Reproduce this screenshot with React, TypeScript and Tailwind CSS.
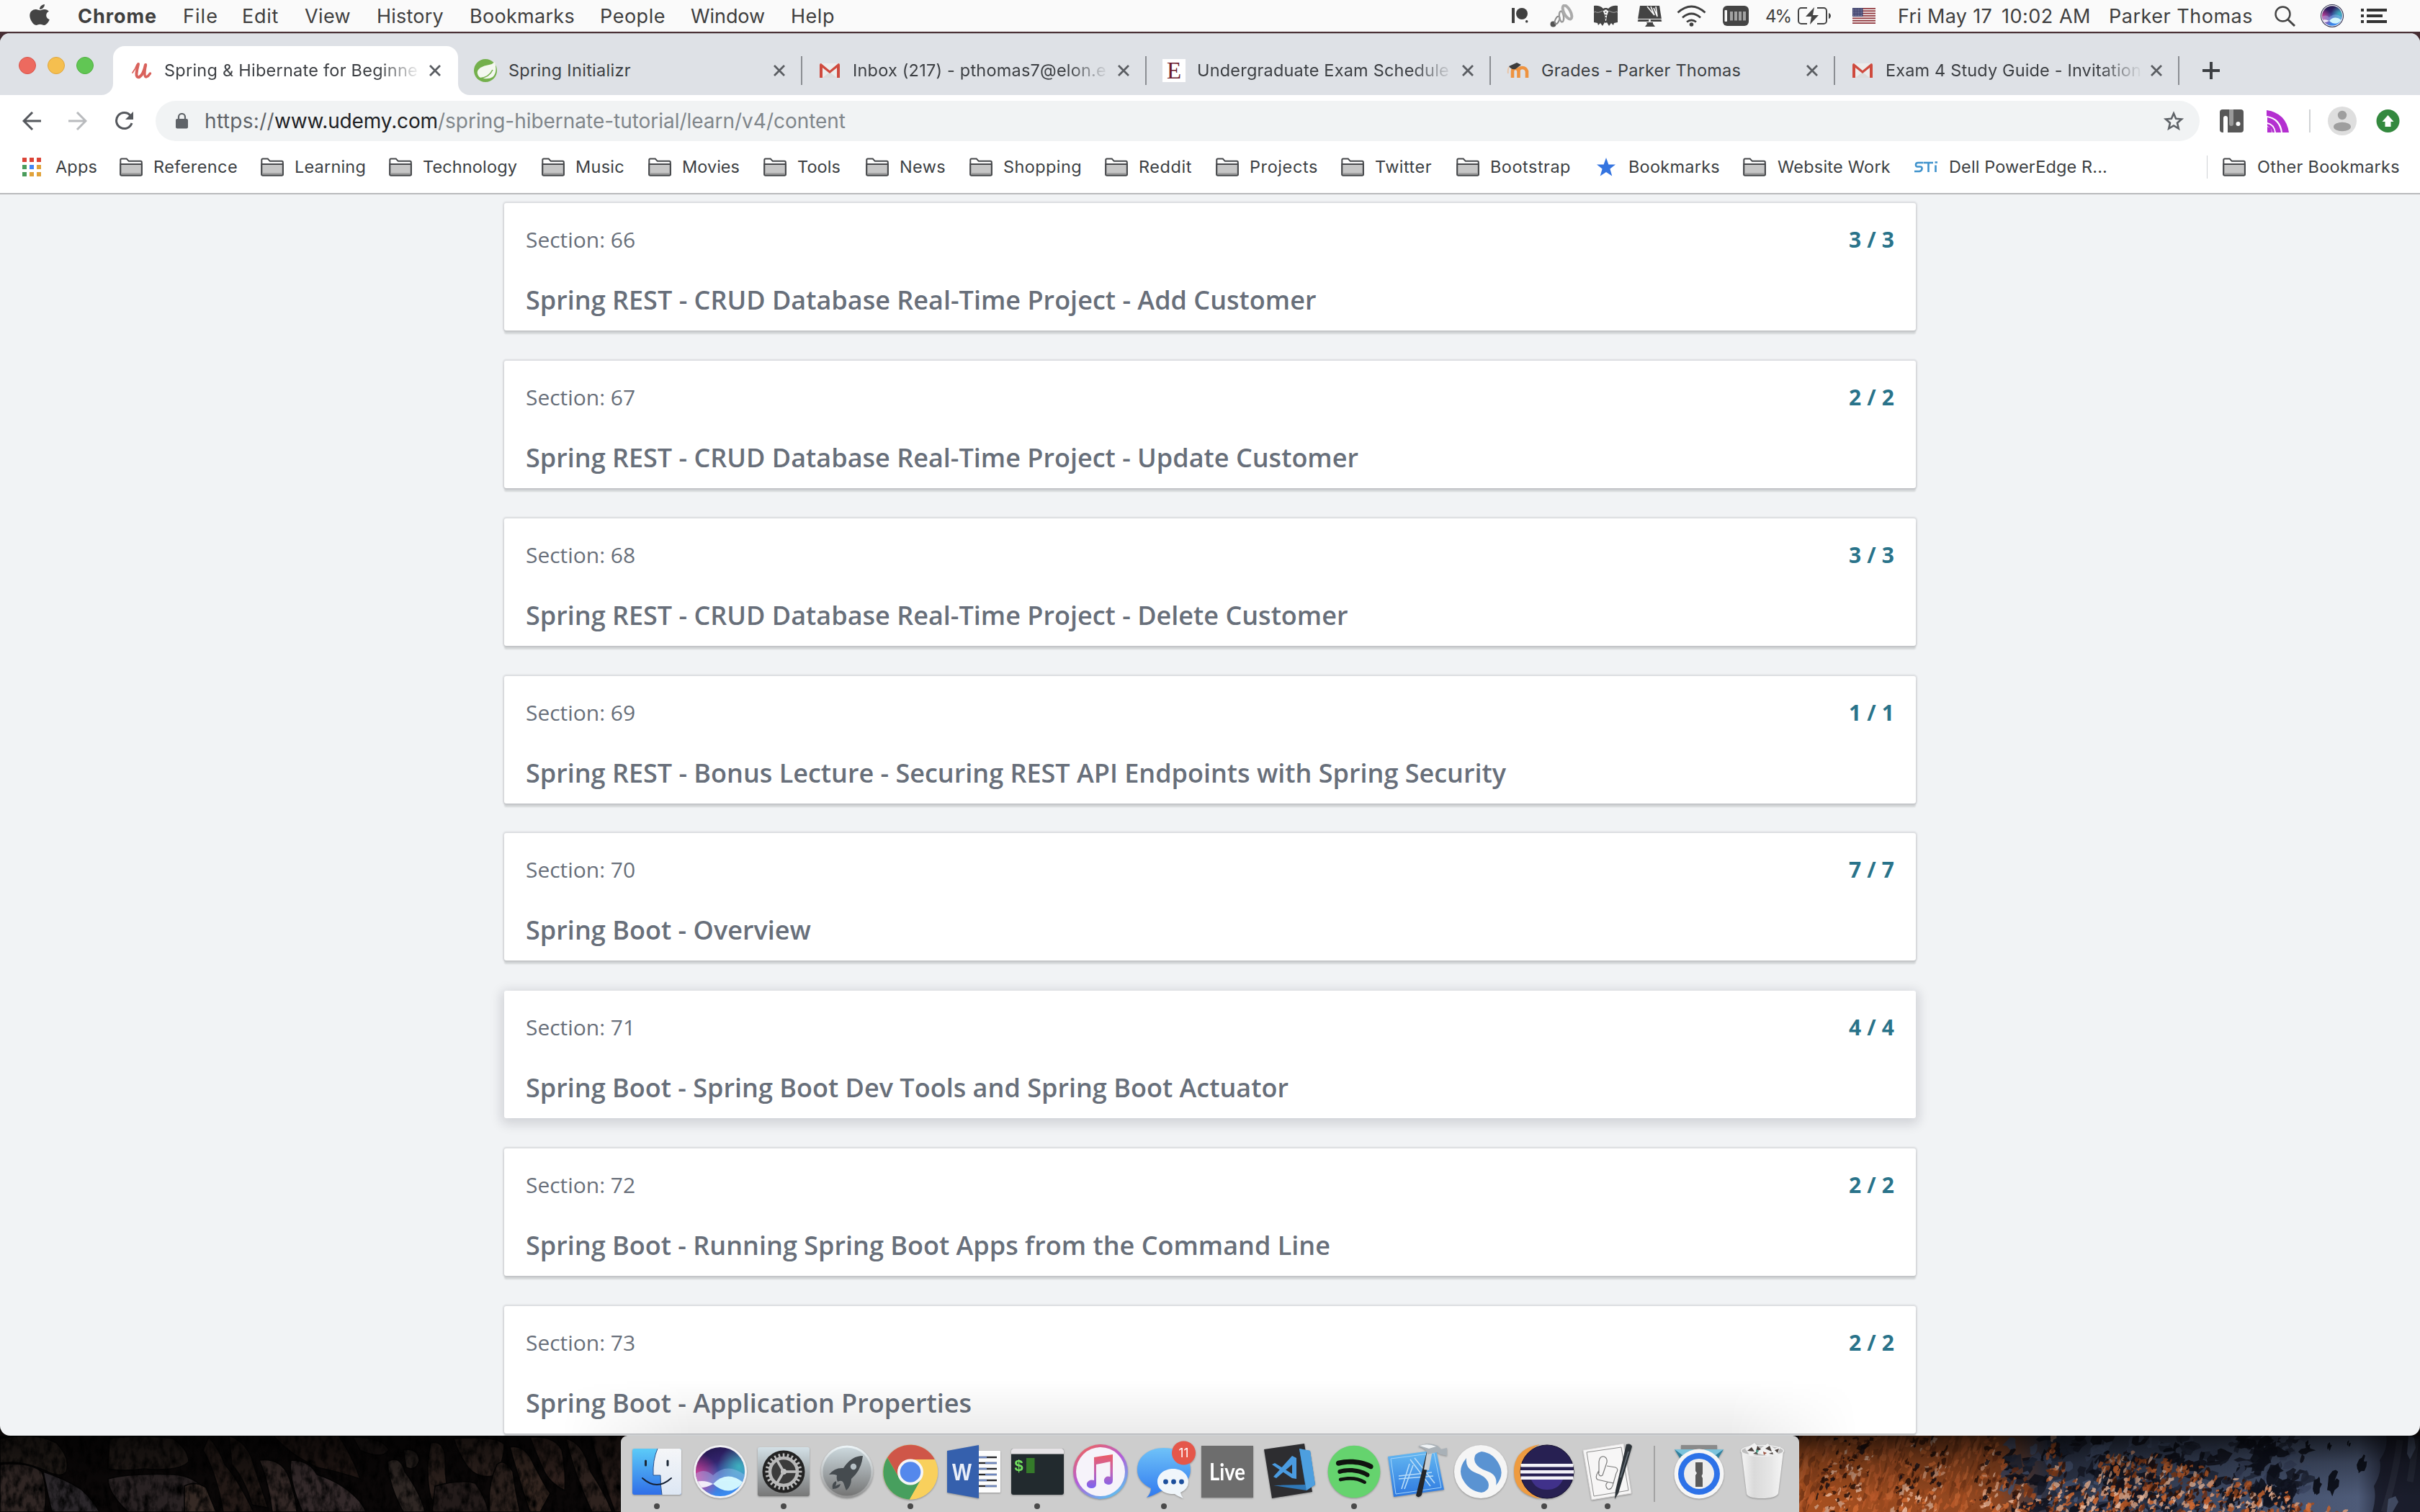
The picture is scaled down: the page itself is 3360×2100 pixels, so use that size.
import React, { useLayoutEffect, useRef } from "react";
import { FaApple, FaSpotify } from "react-icons/fa";

/* Text whose tracking is computed so that it fills a given advance width. */
function Fit({ w, className = "", children }: { w: number; className?: string; children: string }) {
  const ref = useRef<HTMLSpanElement>(null);
  useLayoutEffect(() => {
    const el = ref.current;
    if (!el) return;
    el.style.letterSpacing = "0px";
    const natural = el.getBoundingClientRect().width;
    el.style.letterSpacing = `${(w - natural) / children.length}px`;
  }, [w, children]);
  return (
    <span ref={ref} className={"inline-block shrink-0 whitespace-pre " + className}>
      {children}
    </span>
  );
}

/* ------------------------------ menu bar ------------------------------ */

const menus = [
  { t: "Chrome", w: 110, slot: "w-[146px] font-bold" },
  { t: "File", w: 49, slot: "w-[82px]" },
  { t: "Edit", w: 51, slot: "w-[87px]" },
  { t: "View", w: 64, slot: "w-[100px]" },
  { t: "History", w: 93, slot: "w-[129px]" },
  { t: "Bookmarks", w: 146, slot: "w-[181px]" },
  { t: "People", w: 91, slot: "w-[126px]" },
  { t: "Window", w: 103, slot: "w-[139px]" },
  { t: "Help", w: 61, slot: "w-[70px]" },
];

function BatteryIcon() {
  return (
    <svg width="46" height="26" viewBox="0 0 46 26" fill="none" stroke="#444" strokeWidth="2">
      <path d="M13 2H5a4 4 0 0 0-4 4v14a4 4 0 0 0 4 4h8M27 2h9a4 4 0 0 1 4 4v14a4 4 0 0 1-4 4h-9" />
      <path d="M43 9v8q3-1 3-4t-3-4Z" fill="#444" stroke="none" />
      <path d="M23 1 11 14h8l-2 11 12-13h-8Z" fill="#444" stroke="none" />
    </svg>
  );
}

function Flag() {
  return (
    <svg width="32" height="22" viewBox="0 0 32 22">
      <rect width="32" height="22" fill="#f4eeee" />
      {[0, 1, 2, 3, 4, 5, 6].map((i) => (
        <rect key={i} y={i * 3.38} width="32" height="1.7" fill="#8e3238" />
      ))}
      <rect width="14.5" height="12" fill="#373a66" />
      {[0, 1, 2, 3, 4].map((r) =>
        [0, 1, 2, 3, 4, 5].map((c) => (
          <rect key={r * 6 + c} x={1.2 + c * 2.2} y={1.3 + r * 2.2} width="1" height="1" fill="#c9cbe0" />
        ))
      )}
    </svg>
  );
}

function SiriOrb({ size }: { size: number }) {
  return (
    <svg width={size} height={size} viewBox="0 0 74 74">
      <defs>
        <linearGradient id="orb" x1="0" y1="0" x2=".3" y2="1">
          <stop offset="0" stopColor="#1c1240" />
          <stop offset=".4" stopColor="#33246e" />
          <stop offset=".7" stopColor="#3f6fc4" />
          <stop offset="1" stopColor="#3a8af0" />
        </linearGradient>
        <radialGradient id="orbP" cx="0" cy=".62" r=".5">
          <stop offset="0" stopColor="#f0429a" />
          <stop offset="1" stopColor="#f0429a" stopOpacity="0" />
        </radialGradient>
        <radialGradient id="orbT" cx=".85" cy=".4" r=".4">
          <stop offset="0" stopColor="#3ec7c4" stopOpacity=".8" />
          <stop offset="1" stopColor="#3ec7c4" stopOpacity="0" />
        </radialGradient>
        <clipPath id="orbC">
          <circle cx="37" cy="37" r="34" />
        </clipPath>
      </defs>
      <circle cx="37" cy="37" r="37" fill="#f1f1f3" />
      <g clipPath="url(#orbC)">
        <rect width="74" height="74" fill="url(#orb)" />
        <rect width="74" height="74" fill="url(#orbP)" />
        <rect width="74" height="74" fill="url(#orbT)" />
        <path d="M0 42Q14 30 27 42Q48 22 74 44V58Q50 44 27 54Q12 62 0 54Z" fill="#9fc0f5" opacity=".4" />
        <path d="M0 52q14-5 27 2q-13 8-27 4Z" fill="#fff" opacity=".85" />
        <path d="M27 54Q46 34 69 52Q50 74 27 54Z" fill="#d8fbff" opacity=".95" />
      </g>
    </svg>
  );
}

function MenuBar() {
  return (
    <div className="flex h-[44px] w-full shrink-0 items-center bg-[#fafafa] pl-[42px] text-[27px] leading-[45px] text-[#3f3f3f]">
      <div className="w-[66px]">
        <FaApple className="-mt-1 -ml-px h-[33px] w-[28px] text-[#444]" preserveAspectRatio="none" />
      </div>
      {menus.map((m) => (
        <div key={m.t} className={m.slot}>
          <Fit w={m.w}>{m.t}</Fit>
        </div>
      ))}
      <div className="ml-auto flex w-[1261px] items-center">
        <div className="w-[53px]">
          <svg width="23" height="22" viewBox="0 0 23 22" fill="#3f3f3f">
            <rect width="4" height="21" />
            <circle cx="14" cy="8" r="8" />
            <rect x="19" y="17" width="3.4" height="3.4" rx="1.5" />
          </svg>
        </div>
        <div className="w-[61px]">
          <svg width="34" height="32" viewBox="0 0 34 32" fill="none">
            <circle cx="4.5" cy="27.5" r="4" fill="#555" />
            <ellipse cx="10" cy="22" rx="2.6" ry="5.5" stroke="#888" strokeWidth="2" transform="rotate(24 10 22)" />
            <ellipse cx="16" cy="17" rx="3" ry="7.500" stroke="#999" strokeWidth="2.4" transform="rotate(-8 16 17)" />
            <ellipse cx="24" cy="11" rx="4.5" ry="10.500" stroke="#aaa" strokeWidth="4" transform="rotate(-28 24 11)" />
          </svg>
        </div>
        <div className="w-[60px]">
          <svg width="33" height="30" viewBox="0 0 33 30" fill="#444">
            <path d="M0 1q8-1 13 4l2-1h3l2 1q5-5 13-4v8q-1 1 0 2v13l-5 1-1 3-3-3-3 4-3-5-1.500 1-1.500-1-3 5-3-4-3 3-1-3-5-1V11q1-1 0-2Z" />
            <path d="M13 8q4 6 3.500 14Q17 14 20 8l-2 1v-2h-3v2Z" fill="#fafafa" stroke="#fafafa" strokeWidth="1" />
            <path d="M16.500 9v11" stroke="#444" strokeWidth="1.500" strokeDasharray="2 2" />
            <path d="M1 9q5 3 11-1M32 9q-5 3-11-1" stroke="#aaa" fill="none" />
          </svg>
        </div>
        <div className="w-[55px]">
          <svg width="35" height="29" viewBox="0 0 35 29" fill="#444">
            <path d="M4 0h27l3.500 22H.5Z" />
            <path d="M1 18.500h33l.5 4H.5Z" stroke="#fafafa" strokeWidth="1" />
            <circle cx="17.500" cy="20.500" r="1.500" fill="#fafafa" />
            <path d="M14 1l10 12-5-12M23 3l5 12-2-14" stroke="#fafafa" strokeWidth="1.600" fill="none" />
            <path d="M13 23h9v2l3 4H11l3-4Z" />
          </svg>
        </div>
        <div className="w-[64px]">
          <svg width="41" height="30" viewBox="0 0 41 30" fill="none" stroke="#3f3f3f" strokeWidth="2.800">
            <path d="M1.500 10.500q19-17 38 0M8 17.500q12.500-11 25 0M14 23.500q6.500-5 13 0" />
            <circle cx="20.500" cy="27" r="2.800" fill="#3f3f3f" stroke="none" />
          </svg>
        </div>
        <div className="w-[59px]">
          <svg width="36" height="28" viewBox="0 0 36 28">
            <rect width="36" height="28" rx="6" fill="#444" />
            <rect x="2.500" y="6" width="3.500" height="16" rx="1" fill="#fafafa" />
            {[10, 16, 22, 28].map((x) => (
              <rect key={x} x={x} y="8" width="4" height="12.500" fill="#a2a2a2" />
            ))}
          </svg>
        </div>
        <div className="w-[45px] text-[24px]">
          <Fit w={35}>4%</Fit>
        </div>
        <div className="w-[76px]">
          <BatteryIcon />
        </div>
        <div className="w-[63px]">
          <Flag />
        </div>
        <div className="w-[144px]">
          <Fit w={131}>Fri May 17</Fit>
        </div>
        <div className="w-[149px]">
          <Fit w={124}>10:02 AM</Fit>
        </div>
        <div className="w-[230px]">
          <Fit w={200}>Parker Thomas</Fit>
        </div>
        <div className="w-[64px]">
          <svg width="30" height="29" viewBox="0 0 30 29" fill="none" stroke="#444" strokeWidth="2.400">
            <circle cx="11.500" cy="11.500" r="10" />
            <path d="M18.500 19l9.500 9" strokeWidth="3" />
          </svg>
        </div>
        <div className="flex w-[56px]">
          <div className="rounded-full bg-[#28284a] p-[1px]">
            <SiriOrb size={30} />
          </div>
        </div>
        <svg width="36" height="20" viewBox="0 0 36 20" fill="#333">
          <path d="M0 0h4v4H0zM0 8h4v4H0zM0 16h4v4H0zM8 0h28v4H8zM8 8h22v4H8zM8 16h28v4H8z" />
        </svg>
      </div>
    </div>
  );
}

/* ------------------------------ tab strip ------------------------------ */

function UdemyIcon() {
  return (
    <svg width="32" height="32" viewBox="0 0 32 32" fill="none" stroke="#d9625c" strokeLinecap="round">
      <path d="M11 7Q9 15 8.500 20Q8 26 12.500 25Q18 22 21 8" strokeWidth="4" />
      <path d="M21.500 8Q18 25 22 25Q25 24 27.500 20" strokeWidth="3.400" />
      <path d="M3 19Q7 14 9 8" strokeWidth="1.800" />
    </svg>
  );
}
function SpringIcon() {
  return (
    <svg width="32" height="32" viewBox="0 0 32 32">
      <circle cx="16" cy="16" r="16" fill="#74b04c" />
      <path d="M29 4q4 15-3 21-6 4-18 1Q1 18 9 12q5-3 12-4 5-1 8-4Z" fill="#f4f8f0" />
      <path d="M7 27q14-1 19-12" stroke="#74b04c" strokeWidth="1.600" fill="none" />
      <circle cx="7" cy="26.500" r="1.800" fill="#74b04c" />
    </svg>
  );
}
function GmailIcon() {
  return (
    <svg width="32" height="32" viewBox="0 0 32 32">
      <path d="M2 6h28v20H2Z" fill="#ececec" />
      <path d="M16 18 6 26h20Z" fill="#dcdcdc" />
      <path d="M2 26V8q0-2 2-2l12 10L28 6q2 0 2 2v18h-4V12l-10 8L6 12v14Z" fill="#cf4a3e" />
    </svg>
  );
}
function ElonIcon() {
  return (
    <span className="block h-[32px] w-[32px] bg-white text-center font-['Liberation_Serif'] text-[33px] leading-[33px] text-[#6b1b2e]">
      E
    </span>
  );
}
function MoodleIcon() {
  return (
    <svg width="32" height="32" viewBox="0 0 32 32">
      <path d="M8 26V17q0-4 4-4t4.500 4v9M16.500 26V17q0-5 5-5t6.500 5v9" fill="none" stroke="#ee9340" strokeWidth="4.600" />
      <path d="M3 10 14 5l6 3-8 6q-6 1-9-4Z" fill="#3c3c3c" />
      <path d="M3 11q-2 5-1 9" stroke="#e9c5a8" strokeWidth="2" fill="none" />
    </svg>
  );
}
function CloseX() {
  return (
    <svg width="16" height="16" viewBox="0 0 16 16" stroke="#5a5d62" strokeWidth="2.800" className="ml-auto">
      <path d="M1 1l14 14M15 1 1 15" />
    </svg>
  );
}

const idleTabs = [
  { icon: <SpringIcon />, t: "Spring Initializr", w: 170, fade: false },
  { icon: <GmailIcon />, t: "Inbox (217) - pthomas7@elon.e", w: 352, fade: true },
  { icon: <ElonIcon />, t: "Undergraduate Exam Schedule", w: 350, fade: true },
  { icon: <MoodleIcon />, t: "Grades - Parker Thomas", w: 277, fade: false },
  { icon: <GmailIcon />, t: "Exam 4 Study Guide - Invitation", w: 355, fade: true },
];

const fadeMask = "[mask-image:linear-gradient(to_right,#000_0,#000_298px,transparent_357px)]";

function TabStrip() {
  return (
    <div className="flex h-[85px] shrink-0 bg-[#dee1e6] pl-[26px] text-[23.5px] text-[#3c3f43]">
      <div className="flex w-[115px] gap-[16px] pt-[32px]">
        <span className="h-[24px] w-[24px] rounded-full border border-[#d9544b] bg-[#ed6a5f]" />
        <span className="h-[24px] w-[24px] rounded-full border border-[#dfa63d] bg-[#f5bf4f]" />
        <span className="h-[24px] w-[24px] rounded-full border border-[#4fb03f] bg-[#61c654]" />
      </div>
      <div className="flex items-end">
        <svg width="16" height="16" viewBox="0 0 16 16">
          <path d="M0 16A16 16 0 0 0 16 0V16Z" fill="#fff" />
        </svg>
        <div className="flex h-[68px] w-[479px] items-center rounded-t-[16px] bg-white pr-[24px] pl-[24px]">
          <UdemyIcon />
          <div className={"ml-[15px] w-[357px] " + fadeMask}>
            <Fit w={352}>Spring & Hibernate for Beginne</Fit>
          </div>
          <CloseX />
        </div>
        <svg width="16" height="16" viewBox="0 0 16 16">
          <path d="M0 0V16H16A16 16 0 0 1 0 0Z" fill="#fff" />
        </svg>
      </div>
      <div className="-ml-[16px] flex pt-[17px]">
        {idleTabs.map((tab) => (
          <div key={tab.t} className="flex h-[68px] w-[478px] items-center">
            <div className="flex w-[476px] items-center pr-[22px] pl-[22px]">
              {tab.icon}
              <div className={"ml-[16px] w-[357px] " + (tab.fade ? fadeMask : "")}>
                <Fit w={tab.w}>{tab.t}</Fit>
              </div>
              <CloseX />
            </div>
            <span className="h-[40px] w-[2px] bg-[#8b8e93]" />
          </div>
        ))}
        <svg width="24" height="24" viewBox="0 0 24 24" stroke="#3c3f43" strokeWidth="4" className="mt-[22px] ml-[32px]">
          <path d="M12 0v24M0 12h24" />
        </svg>
      </div>
    </div>
  );
}

/* ------------------------------ toolbar ------------------------------ */

function Toolbar() {
  return (
    <div className="flex h-[72px] shrink-0 items-center bg-white pl-[31px]">
      <svg width="26" height="26" viewBox="0 0 26 26" fill="none" stroke="#55585d" strokeWidth="3">
        <path d="M14 1 2 13l12 12M2 13h24" />
      </svg>
      <svg width="26" height="26" viewBox="0 0 26 26" fill="none" stroke="#b9bbbe" strokeWidth="3" className="ml-[38px]">
        <path d="M12 1l12 12-12 12M24 13H0" />
      </svg>
      <svg width="27" height="26" viewBox="0 0 27 26" fill="none" stroke="#55585d" strokeWidth="3" className="ml-[38px]">
        <path d="M22 5.500A11 11 0 1 0 24 16" />
        <path d="M26 0v11H15Z" fill="#55585d" stroke="none" />
      </svg>
      <div className="ml-[30px] flex h-[56px] w-[2838px] items-center rounded-full bg-[#f1f3f4] pr-[21px] pl-[28px] text-[28px] text-[#80868b]">
        <svg width="17" height="22" viewBox="0 0 17 22" className="mr-[23px]">
          <rect y="8" width="17" height="13.500" rx="2" fill="#5f6368" />
          <path d="M4 9V5.500a4.500 4.500 0 0 1 9 0V9" fill="none" stroke="#5f6368" strokeWidth="2.200" />
        </svg>
        <Fit w={97} className="text-[#5f6368]">https://</Fit>
        <Fit w={227} className="text-[#202124]">www.udemy.com</Fit>
        <Fit w={566}>/spring-hibernate-tutorial/learn/v4/content</Fit>
        <svg width="30" height="28" viewBox="0 0 30 28" fill="none" stroke="#5f6368" strokeWidth="2.600" className="ml-auto">
          <path d="M15 3.500l3.100 7.300 7.900.7-6 5.200 1.800 7.800L15 20.400l-6.800 4.100L10 16.700l-6-5.200 7.900-.7Z" />
        </svg>
      </div>
      <svg width="33" height="32" viewBox="0 0 33 32" className="ml-[28px]">
        <rect width="33" height="32" rx="4" fill="#585858" />
        <path d="M5 32V12q0-3 3-3t3 3v20Z" fill="#fff" />
        <path d="M13 0h6v20q0 3-3 3t-3-3Z" fill="#999" />
        <circle cx="25.500" cy="20" r="3" fill="#fff" />
      </svg>
      <svg width="31" height="31" viewBox="0 0 31 31" fill="#b42fd0" className="ml-[32px]">
        <path d="M0 0Q27 4 31 31H22Q20 11 0 8Z" />
        <path d="M1 10Q17 13 20 31H13Q11 19 1 17Z" />
        <path d="M1 19Q10 21 11 31H8Q7 25 1 22ZM1 23q6 1 6 8H1Z" />
      </svg>
      <span className="ml-[28px] h-[32px] w-[2px] bg-[#d0d2d5]" />
      <svg width="40" height="40" viewBox="0 0 40 40" className="ml-[24px]">
        <circle cx="20" cy="20" r="20" fill="#dedede" />
        <circle cx="20" cy="12" r="6.200" fill="#9e9e9e" />
        <ellipse cx="20" cy="28" rx="12" ry="6.200" fill="#9e9e9e" />
      </svg>
      <svg width="33" height="32" viewBox="0 0 33 32" className="ml-[27px]">
        <circle cx="16.500" cy="16" r="16" fill="#34893f" />
        <path d="M16.500 8l8 9h-4v7h-8v-7h-4Z" fill="#fff" />
      </svg>
    </div>
  );
}

/* ------------------------------ bookmarks ------------------------------ */

function Folder() {
  return (
    <svg width="32" height="26" viewBox="0 0 32 26">
      <path d="M1.300 6V3q0-1.500 1.500-1.500h7l3 3.300h16.500q1.500 0 1.500 1.500V23q0 1.500-1.500 1.500H2.800Q1.300 24.500 1.300 23Z" fill="#fff" stroke="#46484b" strokeWidth="2" />
      <path d="M1.300 9h29.500V23q0 1.500-1.500 1.500H2.800Q1.300 24.500 1.300 23Z" fill="#c6c6c6" stroke="#46484b" strokeWidth="2" />
      <path d="M2.500 21.300h27v2h-27Z" fill="#9c9c9c" />
    </svg>
  );
}

const folders = [
  { t: "Reference", w: 117, slot: "w-[196px]" },
  { t: "Learning", w: 99, slot: "w-[178px]" },
  { t: "Technology", w: 131, slot: "w-[212px]" },
  { t: "Music", w: 68, slot: "w-[148px]" },
  { t: "Movies", w: 80, slot: "w-[160px]" },
  { t: "Tools", w: 60, slot: "w-[142px]" },
  { t: "News", w: 64, slot: "w-[144px]" },
  { t: "Shopping", w: 109, slot: "w-[188px]" },
  { t: "Reddit", w: 74, slot: "w-[154px]" },
  { t: "Projects", w: 95, slot: "w-[174px]" },
  { t: "Twitter", w: 79, slot: "w-[160px]" },
  { t: "Bootstrap", w: 112, slot: "w-[195px]" },
];

const appDots = ["#db4437", "#db4437", "#db4437", "#4a9c5c", "#4285f4", "#e0a23a", "#4a9c5c", "#e0a23a", "#e0a23a"];

function BookmarksBar() {
  return (
    <div className="flex h-[64px] shrink-0 items-center bg-white pb-[8px] pl-[31px] text-[23.5px] text-[#3c3f43]">
      <svg width="26" height="26" viewBox="0 0 26 26">
        {appDots.map((c, i) => (
          <rect key={i} x={(i % 3) * 10} y={Math.floor(i / 3) * 10} width="6" height="6" fill={c} />
        ))}
      </svg>
      <div className="ml-[20px] w-[89px]">
        <Fit w={58}>Apps</Fit>
      </div>
      {folders.map((f) => (
        <div key={f.t} className={"flex items-center gap-[15px] " + f.slot}>
          <Folder />
          <Fit w={f.w}>{f.t}</Fit>
        </div>
      ))}
      <div className="flex w-[203px] items-center gap-[18px]">
        <svg width="26" height="26" viewBox="0 0 26 26" fill="#3474e0">
          <path d="M13 0l3.400 9.600H26l-7.600 6 2.900 10L13 20l-8.300 5.600 2.900-10L0 9.600h9.600Z" />
        </svg>
        <Fit w={127}>Bookmarks</Fit>
      </div>
      <div className="flex w-[238px] items-center gap-[16px]">
        <Folder />
        <Fit w={157}>Website Work</Fit>
      </div>
      <div className="flex items-center gap-[15px]">
        <svg width="33" height="16" viewBox="0 0 33 16" fill="none" stroke="#3f92cc" strokeWidth="2.600">
          <path d="M12.500 2H5Q2 2 2 5T5 7.500H8Q11 7.500 10.500 10.500T7 14H0M13 2H26M19.500 2V15M29.500 5.500V15M28.500 1.500H32" />
        </svg>
        <Fit w={220}>Dell PowerEdge R...</Fit>
      </div>
      <div className="ml-auto flex items-center pr-[28px]">
        <span className="h-[32px] w-[1px] bg-[#cfd1d4]" />
        <span className="ml-[21px]">
          <Folder />
        </span>
        <Fit w={198} className="ml-[16px]">Other Bookmarks</Fit>
      </div>
    </div>
  );
}

/* ------------------------------ course sections ------------------------------ */

const sections = [
  { n: 66, t: "Spring REST - CRUD Database Real-Time Project - Add Customer", c: "3 / 3", w: 1097.500 },
  { n: 67, t: "Spring REST - CRUD Database Real-Time Project - Update Customer", c: "2 / 2", w: 1156 },
  { n: 68, t: "Spring REST - CRUD Database Real-Time Project - Delete Customer", c: "3 / 3", w: 1141.500 },
  { n: 69, t: "Spring REST - Bonus Lecture - Securing REST API Endpoints with Spring Security", c: "1 / 1", w: 1361 },
  { n: 70, t: "Spring Boot - Overview", c: "7 / 7", w: 396 },
  { n: 71, t: "Spring Boot - Spring Boot Dev Tools and Spring Boot Actuator", c: "4 / 4", w: 1059 },
  { n: 72, t: "Spring Boot - Running Spring Boot Apps from the Command Line", c: "2 / 2", w: 1117 },
  { n: 73, t: "Spring Boot - Application Properties", c: "2 / 2", w: 619 },
];

function SectionCard({ s }: { s: (typeof sections)[number] }) {
  const shadow =
    s.n === 71
      ? "shadow-[0_4px_16px_4px_rgba(20,23,40,0.15)]"
      : "shadow-[0_0_2px_2px_rgba(20,23,28,0.1),0_5px_2px_0_rgba(20,23,28,0.12)]";
  return (
    <div className={"h-[177px] shrink-0 rounded-[3px] bg-white px-[30px] pt-[31px] text-[#686f7a] " + shadow}>
      <div className="flex h-[40px] items-center justify-between text-[30px] leading-[40px]">
        <Fit w={152}>{`Section: ${s.n}`}</Fit>
        <Fit w={63} className="font-bold text-[#29738a]">{s.c}</Fit>
      </div>
      <div className="mt-[40px] text-[36px] leading-[48px] font-semibold">
        <Fit w={s.w}>{s.t}</Fit>
      </div>
    </div>
  );
}

/* ------------------------------ wallpaper ------------------------------ */

function rng(seed: number) {
  let s = seed;
  return () => {
    s = (s * 16807) % 2147483647;
    return s / 2147483647;
  };
}

function shard(r: () => number, x: number, y: number, w: number, h: number) {
  const pts: string[] = [];
  for (let i = 0; i < 9; i++) {
    const a = (i / 9) * Math.PI * 2;
    const k = 0.4 + r() * 0.8;
    pts.push(`${(x + Math.cos(a) * w * k - Math.sin(a) * h * 0.25).toFixed(1)},${(y + Math.sin(a) * h * k).toFixed(1)}`);
  }
  return pts.join(" ");
}

function pick(r: () => number, list: string[]) {
  return list[Math.floor(r() * list.length)];
}

/* Height of the sunlit ridge at a given x: rows below it are orange. */
function ridge(x: number) {
  if (x < 280) return -20;
  if (x < 345) return 20 + (x - 280) * 1.2;
  if (x < 370) return -10 + (x - 345) * 2;
  if (x < 405) return 60;
  if (x < 430) return 60 - (x - 405) * 1.6;
  if (x < 520) return 22 + (x - 430) * 0.16;
  return 36 + (x - 520) * 0.3;
}

function WallpaperRight() {
  const r = rng(4217);
  const shapes: React.ReactNode[] = [];
  for (let i = 0; i < 300; i++) {
    const x = 280 + r() * 430;
    const y = r() * 106;
    const c = pick(r, ["#10121c", "#171b29", "#475573", "#3c4763", "#0c0e17", "#232a3d"]);
    shapes.push(<polygon key={"b" + i} points={shard(r, x, y, 3 + r() * 12, 3 + r() * 9)} fill={c} opacity=".85" />);
  }
  for (let i = 0; i < 26; i++) {
    const x = 640 + r() * 60 - (1 - i / 26) * 20;
    shapes.push(<polygon key={"n" + i} points={shard(r, x - 10, r() * 90, 7 + r() * 8, 6 + r() * 12)} fill="#10131f" opacity=".9" />);
  }
  for (let i = 0; i < 1900; i++) {
    const x = r() * 760;
    const y = r() * 110;
    if (y < ridge(x) + (r() - 0.5) * 12) continue;
    const lit = r() < 0.08 + y / 260;
    const cliff = x < 300 && Math.sin(x / 17 + y / 60) > 0.3;
    const c = lit && !cliff
      ? pick(r, ["#d99a78", "#e8b79c", "#cf6a33", "#c99a80"])
      : cliff
        ? pick(r, ["#a34e22", "#b8592a", "#96481f", "#7a3818", "#bb6030"])
        : pick(r, ["#a34e22", "#8a3f1a", "#b8592a", "#3d1a0c", "#28120a", "#1b1015", "#6e3016", "#c4632e"]);
    shapes.push(<polygon key={"o" + i} points={shard(r, x, y, 1.500 + r() * 4, cliff ? 5 + r() * 9 : 2 + r() * 5)} fill={c} opacity=".85" />);
  }
  const trees: [number, number, number][] = [
    [740, 62, 26],
    [780, 36, 20],
    [718, 66, 22],
    [705, 12, 10],
    [735, 14, 8],
    [762, 10, 6],
  ];
  trees.forEach(([x, y, h], i) => {
    shapes.push(<polygon key={"t" + i} points={shard(r, x, y, h / 4, h / 1.6)} fill="#0f131e" />);
    shapes.push(<polygon key={"u" + i} points={shard(r, x + 2, y + h / 3, h / 3.5, h / 2)} fill="#0f131e" />);
  });
  return (
    <svg width="862" height="106" viewBox="0 0 862 106" className="shrink-0">
      <defs>
        <linearGradient id="wr" x1="0" x2="1" y1="0" y2="0">
          <stop offset="0" stopColor="#a8501f" />
          <stop offset=".32" stopColor="#8c4520" />
          <stop offset=".4" stopColor="#2c3448" />
          <stop offset=".78" stopColor="#46536f" />
          <stop offset=".9" stopColor="#4e5b78" />
          <stop offset=".94" stopColor="#2a3044" />
          <stop offset="1" stopColor="#252938" />
        </linearGradient>
        <linearGradient id="shade" x1="0" x2="0" y1="0" y2="1">
          <stop offset="0" stopColor="#000" stopOpacity=".7" />
          <stop offset=".35" stopColor="#000" stopOpacity=".28" />
          <stop offset=".8" stopColor="#000" stopOpacity="0" />
        </linearGradient>
      </defs>
      <rect width="862" height="106" fill="url(#wr)" />
      {shapes}
      <path d="M815 0 862 0V106H796Q802 84 798 70Q810 50 806 34Q818 18 815 0Z" fill="#191c2a" opacity=".9" />
      <path d="M834 6q-6 50-22 100M856 4q-4 40-8 60" stroke="#2b2f3d" strokeWidth="9" fill="none" opacity=".7" />
      <path d="M846 0l8 3 2 14-8 16-4-8Z M818 88l10-4 4 8-8 14h-8Z" fill="#4a556e" opacity=".8" />
      <rect width="862" height="106" fill="url(#shade)" />
    </svg>
  );
}

const rocks = [
  { d: "M0 4Q50 -6 78 10Q98 30 92 50Q84 60 62 48Q30 34 0 38Z", c: "#241d19" },
  { d: "M0 40Q40 36 58 50Q66 70 62 106H0Z", c: "#302624" },
  { d: "M60 50Q90 60 112 74Q130 90 138 106H72Q64 70 60 50Z", c: "#2b272b" },
  { d: "M152 4Q200 -2 240 4Q262 20 262 36Q250 50 200 46Q170 50 150 46Z", c: "#211a17" },
  { d: "M150 60Q180 52 240 54Q280 56 290 90Q296 100 300 106H178Q150 80 150 60Z", c: "#292223" },
  { d: "M256 70Q270 62 286 72L300 106H256Z", c: "#362a25" },
  { d: "M290 2Q305 20 312 40Q330 60 352 106H310Q300 50 282 20Z", c: "#231916" },
  { d: "M318 0Q345 10 352 40Q362 70 372 100L350 96Q340 60 322 40Z", c: "#1e1613" },
  { d: "M360 34Q392 30 402 60Q412 90 412 106H378Q372 60 360 34Z", c: "#322725" },
  { d: "M404 34Q430 34 440 54Q478 66 500 92Q506 100 508 106H420Q400 60 404 34Z", c: "#33292a" },
  { d: "M380 0H470Q490 30 500 60Q470 50 440 44Q400 24 380 0Z", c: "#201613" },
  { d: "M490 2Q530 2 540 20Q530 34 500 20Z", c: "#191312" },
  { d: "M538 36Q556 26 562 50Q584 80 590 106H560Q540 70 538 36Z", c: "#2f2724" },
  { d: "M560 20Q580 16 582 34Q578 50 564 44Z", c: "#28211e" },
  { d: "M598 10Q616 6 618 30Q618 60 622 80Q606 100 598 86Q590 50 598 10Z", c: "#2a1f1b" },
  { d: "M630 4Q690 0 700 12Q700 40 684 56Q664 60 650 44Q636 24 630 4Z", c: "#2d211d" },
  { d: "M604 70Q640 60 660 66Q676 90 678 106H600Z", c: "#231b1a" },
  { d: "M690 40Q700 30 712 50Q716 80 722 106H680Q676 70 690 40Z", c: "#2b201c" },
  { d: "M708 16Q724 12 736 30Q756 70 764 80L750 106H736Q720 60 708 16Z", c: "#33251f" },
  { d: "M736 2Q770 0 780 20Q786 50 784 76Q764 66 756 50Q744 24 736 2Z", c: "#2e201c" },
  { d: "M786 4Q810 10 820 50Q840 80 850 106H822Q796 50 786 4Z", c: "#2e221e" },
  { d: "M820 0H862V106H854Q836 60 820 0Z", c: "#251a17" },
];

function WallpaperLeft() {
  return (
    <svg width="862" height="106" viewBox="0 0 862 106" className="shrink-0">
      <defs>
        <filter id="grain" x="0" y="0" width="100%" height="100%">
          <feTurbulence type="fractalNoise" baseFrequency=".11 .06" numOctaves="4" seed="8" />
          <feColorMatrix values="0 0 0 0 0  0 0 0 0 0  0 0 0 0 0  0 0 0 2 -.75" />
        </filter>
        <linearGradient id="shadeL" x1="0" x2="0" y1="0" y2="1">
          <stop offset="0" stopColor="#000" stopOpacity=".55" />
          <stop offset=".6" stopColor="#000" stopOpacity="0" />
        </linearGradient>
      </defs>
      <rect width="862" height="106" fill="#0a0707" />
      {rocks.map((k, i) => (
        <path key={i} d={k.d} fill={k.c} stroke="#060505" strokeWidth="1.500" />
      ))}
      <rect width="862" height="106" filter="url(#grain)" />
      <rect width="862" height="106" fill="url(#shadeL)" />
    </svg>
  );
}

/* ------------------------------ dock ------------------------------ */
/* Every dock drawing uses an 88 x 94 cell whose centre sits at (44, 50). */

const gearTeeth = Array.from({ length: 24 }, (_, i) => i * 15);

const dockIcons: { name: string; dot: boolean; art: React.ReactNode }[] = [
  {
    name: "finder",
    dot: true,
    art: (
      <>
        <defs>
          <linearGradient id="fi" x1="0" x2="0" y1="0" y2="1">
            <stop offset="0" stopColor="#5ccbf8" />
            <stop offset="1" stopColor="#2f6ee8" />
          </linearGradient>
          <linearGradient id="fw" x1="0" x2="0" y1="0" y2="1">
            <stop offset="0" stopColor="#f5f6f8" />
            <stop offset="1" stopColor="#dde7f4" />
          </linearGradient>
        </defs>
        <rect x="10" y="18" width="68" height="64" rx="3" fill="url(#fi)" />
        <path d="M45 18H75q3 0 3 3V79q0 3-3 3H51Q49 70 49 55H39Q38 34 45 18Z" fill="url(#fw)" />
        <path d="M45 18Q38 34 39 55H49Q49 70 51 82" fill="none" stroke="#27508c" strokeWidth="1" />
        <path d="M28.500 35v6M59 35v6" stroke="#1c2836" strokeWidth="3" strokeLinecap="round" />
        <path d="M24 59Q44 77 64 59" fill="none" stroke="#152033" strokeWidth="2" strokeLinecap="round" />
      </>
    ),
  },
  {
    name: "siri",
    dot: false,
    art: (
      <g transform="translate(7 13)">
        <SiriOrb size={74} />
      </g>
    ),
  },
  {
    name: "settings",
    dot: true,
    art: (
      <>
        <defs>
          <linearGradient id="st" x1="0" x2="0" y1="0" y2="1">
            <stop offset="0" stopColor="#d3e0e6" />
            <stop offset="1" stopColor="#777" />
          </linearGradient>
        </defs>
        <rect x="8" y="16" width="72" height="68" rx="3" fill="url(#st)" />
        <circle cx="44" cy="50" r="29.500" fill="#232323" />
        {gearTeeth.map((a) => (
          <rect key={a} x="42.700" y="24.500" width="2.600" height="6" fill="#bbb" transform={`rotate(${a} 44 50)`} />
        ))}
        <circle cx="44" cy="50" r="19" fill="#3b3b3b" stroke="#b8b8b8" strokeWidth="4.500" />
        <circle cx="44" cy="50" r="4" fill="#ccc" />
        {[0, 120, 240].map((a) => (
          <path key={a} d="M44 50h18" stroke="#bdbdbd" strokeWidth="3.600" transform={`rotate(${a} 44 50)`} />
        ))}
      </>
    ),
  },
  {
    name: "launchpad",
    dot: false,
    art: (
      <>
        <defs>
          <linearGradient id="lp" x1="0" x2="0" y1="0" y2="1">
            <stop offset="0" stopColor="#ccd8dd" />
            <stop offset="1" stopColor="#757575" />
          </linearGradient>
          <linearGradient id="lr" x1="0" x2="0" y1="0" y2="1">
            <stop offset="0" stopColor="#eef6f9" />
            <stop offset="1" stopColor="#929292" />
          </linearGradient>
        </defs>
        <circle cx="44" cy="50" r="36.500" fill="url(#lr)" />
        <circle cx="44" cy="50" r="33.500" fill="url(#lp)" />
        <path d="M66 28Q50 28 39 45Q27 44 19 54Q26 53 30 55Q29 60 31 64Q38 60 40 68Q42 74 43 76Q50 70 50 60Q64 48 66 28Z" fill="#454b4f" />
        <circle cx="53" cy="43" r="4.200" fill="#b5bfc4" />
        <path d="M29 63Q22 66 24 74Q34 74 35 67Q31 68 28 70Q30 66 29 63Z" fill="#454b4f" />
      </>
    ),
  },
  {
    name: "chrome",
    dot: true,
    art: (
      <>
        <circle cx="44" cy="50.500" r="38" fill="#f9d05c" />
        <path d="M44 50.500 77.800 33A38 38 0 0 0 12 30.500L28 58Z" fill="#cf5648" />
        <path d="M12 30.500A38 38 0 0 0 43 88.500L60 59 44 50.500 28 58Z" fill="#479f5e" />
        <path d="M43 88.500A38 38 0 0 0 77.800 33H44V50.500L59 60Z" fill="#f9d05c" />
        <circle cx="44" cy="50.500" r="18" fill="#f6f6f6" />
        <circle cx="44" cy="50.500" r="14.300" fill="#5488ec" />
      </>
    ),
  },
  {
    name: "word",
    dot: false,
    art: (
      <>
        <rect x="48" y="21" width="33" height="58" rx="1" fill="#fdfdfd" />
        {[30, 38, 46, 54, 62, 70].map((y, i) => (
          <g key={y}>
            <path d={`M50 ${y}h26`} stroke="#27282c" strokeWidth="2.400" />
            <path d={i % 2 ? `M60 ${y}h16` : `M50 ${y}h12`} stroke="#6d86bd" strokeWidth="2.400" />
          </g>
        ))}
        <path d="M7 21 51 13V87L7 79Z" fill="#3560ad" />
        <text x="14" y="62" fontFamily="Liberation Sans" fontWeight="700" fontSize="34" fill="#e9eef8" textLength="27" lengthAdjust="spacingAndGlyphs">
          W
        </text>
      </>
    ),
  },
  {
    name: "terminal",
    dot: true,
    art: (
      <>
        <rect x="8" y="18" width="73" height="64" rx="3" fill="#222a2e" />
        <path d="M8 25.500V21q0-3 3-3H78q3 0 3 3v4.500Z" fill="#e6e3e6" />
        <text x="18.500" y="49" textAnchor="middle" fontFamily="Liberation Mono" fontWeight="700" fontSize="22" fill="#71e05e">
          $
        </text>
        <rect x="29" y="31" width="11.500" height="21" fill="#357a2a" />
      </>
    ),
  },
  {
    name: "itunes",
    dot: false,
    art: (
      <>
        <defs>
          <linearGradient id="it" x1=".2" x2=".8" y1="0" y2="1">
            <stop offset="0" stopColor="#f0645c" />
            <stop offset=".45" stopColor="#b45cd8" />
            <stop offset="1" stopColor="#57c8f2" />
          </linearGradient>
          <linearGradient id="nt" x1="0" x2="0" y1="0" y2="1">
            <stop offset="0" stopColor="#ec5b62" />
            <stop offset=".5" stopColor="#c463b4" />
            <stop offset="1" stopColor="#7a62f0" />
          </linearGradient>
        </defs>
        <circle cx="44" cy="50" r="38" fill="url(#it)" />
        <circle cx="44" cy="50" r="34" fill="#f6f3fa" />
        <path d="M35 30 61 26V62Q61 68 54.500 68Q48 67 49 61Q51 55 57.500 57V36L38 40V67Q38 73 31 73Q24 72 25 66Q28 60 35 62Z" fill="url(#nt)" />
      </>
    ),
  },
  {
    name: "messages",
    dot: true,
    art: (
      <>
        <defs>
          <linearGradient id="ms" x1="0" x2="0" y1="0" y2="1">
            <stop offset="0" stopColor="#6fc2f8" />
            <stop offset="1" stopColor="#2f79f0" />
          </linearGradient>
        </defs>
        <path d="M44 17C66 17 81 30 81 47S66 77 40 77Q32 82 20 86Q26 80 26 73Q7 64 7 47C7 30 22 17 44 17Z" fill="url(#ms)" />
        <path d="M57 46C70 46 78 55 78 64Q78 74 67 79Q68 83 71 87Q63 84 59 81C45 82 35 74 35 64S44 46 57 46Z" fill="#f0f6fb" />
        <g fill="#1c4f9c">
          <circle cx="46.500" cy="64" r="3.400" />
          <circle cx="57.500" cy="64" r="3.400" />
          <circle cx="68.500" cy="64" r="3.400" />
        </g>
        <circle cx="71.500" cy="24" r="16.500" fill="#e5574a" />
        <text x="71.500" y="30" textAnchor="middle" fontFamily="Inter" fontSize="17" fill="#fff">
          11
        </text>
      </>
    ),
  },
  {
    name: "live",
    dot: false,
    art: (
      <>
        <rect x="8" y="14" width="72" height="72" fill="#6d6d6d" />
        <text x="44" y="62" textAnchor="middle" fontFamily="Lato" fontWeight="700" fontSize="33" fill="#fff" textLength="50" lengthAdjust="spacingAndGlyphs">
          Live
        </text>
      </>
    ),
  },
  {
    name: "vscode",
    dot: false,
    art: (
      <>
        <path d="M7 19 63 11 74 78 18 87Z" fill="#2d2d30" />
        <path d="M56 18 71 21 78 68 66 76 20 69 64 68Z" fill="#2f78b8" />
        <path d="M56 18 71 21 78 68 66 76Z" fill="#4d9fdf" />
        <path d="M20 57 46 28 52 31V60L46 59 18 40 22 38 46 53V40L24 59Z" fill="#4a9be0" />
      </>
    ),
  },
  {
    name: "spotify",
    dot: true,
    art: (
      <>
        <circle cx="44" cy="50" r="33" fill="#0f140f" />
        <g transform="translate(6.500 12.500)">
          <FaSpotify size={75} color="#65d36e" />
        </g>
      </>
    ),
  },
  {
    name: "xcode",
    dot: false,
    art: (
      <>
        <defs>
          <linearGradient id="xc" x1="0" x2="0" y1="0" y2="1">
            <stop offset="0" stopColor="#66baf2" />
            <stop offset="1" stopColor="#2d78e0" />
          </linearGradient>
        </defs>
        <path d="M3 29 70 20 81 75 11 85Z" fill="url(#xc)" />
        <path d="M7 32 67 24 77 72 14 81Z" fill="none" stroke="#a5d4f8" strokeWidth="1" />
        <g fill="none" stroke="#b8dcf8" strokeWidth="1.600">
          <path d="M34 33 62 70M40 31 68 66" />
          <path d="M33 39 22 74M38 41 26 74" />
          <path d="M18 56 64 51M18 60 66 56" />
        </g>
        <path d="M63 19 50 82Q46 88 42 83L58 18Z" fill="#24262a" />
        <path d="M60 48 65 20 58 19 53 47Z" fill="#c9ced2" />
        <path d="M45 15Q58 8 72 14L77 19 85 17V28L76 26 71 23 58 26Q56 17 45 15Z" fill="#a9b1b7" />
        <path d="M47 14Q58 10 70 15L60 18Z" fill="#f0f3f5" />
      </>
    ),
  },
  {
    name: "simplenote",
    dot: false,
    art: (
      <>
        <circle cx="44" cy="50" r="37" fill="#f5f5f5" />
        <path d="M24 31Q12 45 18 59Q27 77 45 79Q58 76 54 64Q50 56 38 52Q22 46 24 31Z" fill="#5a93d2" />
        <path d="M65 69Q77 55 70 41Q62 24 45 22Q32 25 36 37Q40 45 52 49Q68 54 65 69Z" fill="#5a93d2" />
      </>
    ),
  },
  {
    name: "eclipse",
    dot: true,
    art: (
      <>
        <path d="M38 12Q2 18 2 50T40 88Q14 76 14 50T38 12Z" fill="#ee9b40" />
        <circle cx="48" cy="50" r="37" fill="#272052" stroke="#141030" />
        <path d="M26 61H70Q64 75 48 75T26 61Z" fill="#40318a" />
        <g fill="#f3f2f8">
          <rect x="11.500" y="39" width="73" height="4.500" />
          <rect x="11" y="48" width="74" height="4.500" />
          <rect x="11.500" y="56.500" width="73" height="4.500" />
        </g>
      </>
    ),
  },
  {
    name: "script",
    dot: true,
    art: (
      <>
        <path d="M10 20 66 11 77 80 22 89Z" fill="#f7f6f6" stroke="#d8d6d6" />
        <path d="M15 23 63 16 73 76 25 84Z" fill="none" stroke="#8e8e8e" strokeWidth="1" />
        <path d="M32 52V36Q33 28 39 29Q44 31 43 37L37 55M43 42 55 44Q60 46 56 52L52 66M37 55Q32 58 31 50Q26 58 30 61L52 66Q50 76 44 74Q39 68 45 64" fill="none" stroke="#7d7d7d" strokeWidth="1.200" />
        <path d="M70 12Q76 10 78 15L59 80 54 88 55 76Z" fill="#2d3338" />
        <path d="M73 22 62 58" stroke="#68717a" strokeWidth="1.500" />
      </>
    ),
  },
];

function DockCell({ dot, children, className = "" }: { dot?: boolean; children: React.ReactNode; className?: string }) {
  return (
    <div className={"flex w-[88px] shrink-0 flex-col items-center " + className}>
      <svg width="88" height="94" viewBox="0 0 88 94" className="drop-shadow-[0_1px_1px_rgba(0,0,0,0.3)]">
        {children}
      </svg>
      {dot && <span className="h-[8px] w-[8px] rounded-full bg-[#4a4a4a]" />}
    </div>
  );
}

function Dock() {
  return (
    <div className="flex h-[106px] w-[1636px] shrink-0 bg-[#0a0606]">
      <div className="flex w-full rounded-t-[9px] bg-[#cdcdcd] pl-[6px]">
        {dockIcons.map((d) => (
          <DockCell key={d.name} dot={d.dot}>
            {d.art}
          </DockCell>
        ))}
        <span className="mt-[14px] ml-[20px] h-[78px] w-[2px] bg-[#a3a3a3]" />
        <DockCell className="ml-[18px]">
          <rect x="18" y="13" width="50" height="6" fill="#8a8a8a" />
          <path d="M9 19H77L66 36H20Z" fill="#7cc3dc" />
          <path d="M9 19 24 30 18 34ZM77 19 62 30 68 34Z" fill="#2f7f9d" />
          <circle cx="43" cy="53" r="34.500" fill="#f6f6f6" />
          <circle cx="43" cy="53" r="29" fill="#2d72e8" />
          <circle cx="43" cy="53" r="21" fill="#ededed" />
          <path d="M38 37H48V53l-1.500 3 1.500 3v12H38V55l2-3-2-3Z" fill="#5a5a5a" />
        </DockCell>
        <DockCell>
          <defs>
            <linearGradient id="tr" x1="0" x2="1" y1="0" y2="0">
              <stop offset="0" stopColor="#f4f4f4" />
              <stop offset=".3" stopColor="#dadada" />
              <stop offset=".7" stopColor="#e6e6e6" />
              <stop offset="1" stopColor="#f6f6f6" />
            </linearGradient>
          </defs>
          <path d="M14 22Q42 32 72 22L65 80Q62 87 42 87T21 80Z" fill="url(#tr)" />
          <ellipse cx="43" cy="21" rx="29.500" ry="7.500" fill="#bdbdbd" stroke="#eee" strokeWidth="1.500" />
          <path d="M19 18 32 10 40 18 50 11 60 18 68 15 64 26 50 28 38 25 26 28Z" fill="#f1f1f1" />
          <path d="M22 21l6-5 4 6ZM36 14l5 5-7 3ZM47 18l6-4 3 8ZM60 20l6-2-2 6ZM30 25l5-3 2 4ZM52 25l5-2 1 3Z" fill="#4c4440" />
          <path d="M34 19l4 2-3 4Z" fill="#4aa58f" />
          <path d="M44 22l5 2-4 3Z" fill="#9e5a48" />
        </DockCell>
      </div>
    </div>
  );
}

/* ------------------------------ desktop ------------------------------ */

export default function App() {
  return (
    <div className="flex h-[2100px] w-[3360px] flex-col overflow-hidden bg-[#0a0707] font-['Inter',sans-serif]">
      <MenuBar />
      <div className="flex h-[1950px] shrink-0 flex-col bg-[linear-gradient(to_bottom,#4a3036,#0a0707_60px)] pt-[2px]">
        <div className="relative flex h-[1948px] flex-col overflow-hidden rounded-[14px] bg-[#f1f3f5]">
          <div className="h-[1px] shrink-0 bg-[#b9b9bb]" />
          <TabStrip />
          <Toolbar />
          <BookmarksBar />
          <div className="h-[2px] shrink-0 bg-[#b9babc]" />
          <main className="flex min-h-0 grow flex-col gap-[41.860px] overflow-hidden px-[700px] pt-[12px] font-['Open_Sans',sans-serif]">
            {sections.map((s) => (
              <SectionCard key={s.n} s={s} />
            ))}
          </main>
          <div className="absolute bottom-[2px] left-[780px] h-[76px] w-[1800px] bg-[linear-gradient(to_bottom,transparent,rgba(0,0,0,0.08))] [mask-image:linear-gradient(to_right,transparent,#000_180px,#000_1620px,transparent)]" />
        </div>
      </div>
      <div className="flex h-[106px] shrink-0">
        <WallpaperLeft />
        <Dock />
        <WallpaperRight />
      </div>
    </div>
  );
}
